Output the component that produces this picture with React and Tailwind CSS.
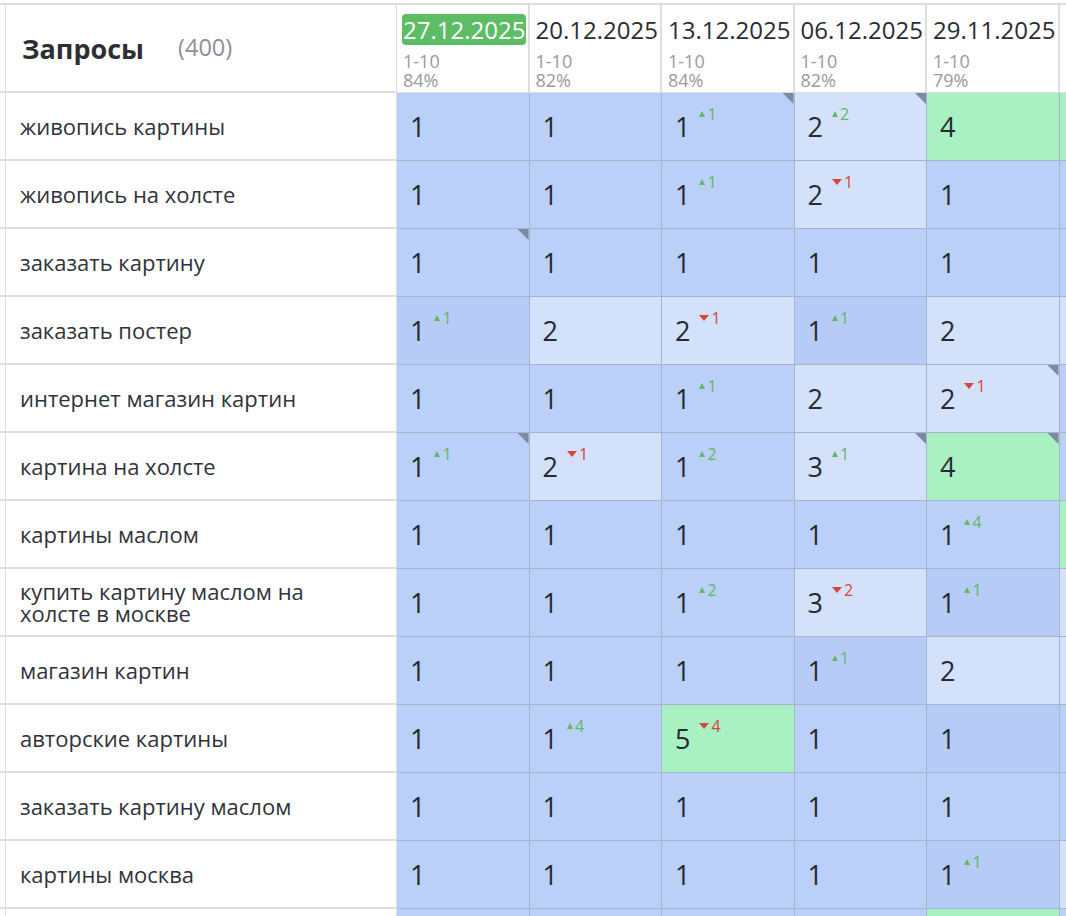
import React from "react";

const dates = [
  { date: "27.12.2025", range: "1-10", pct: "84%", current: true },
  { date: "20.12.2025", range: "1-10", pct: "82%" },
  { date: "13.12.2025", range: "1-10", pct: "84%" },
  { date: "06.12.2025", range: "1-10", pct: "82%" },
  { date: "29.11.2025", range: "1-10", pct: "79%" },
  { date: "22.11.2025", range: "1-10", pct: "80%" },
];

// cell: [value, tone, delta, corner]
const rows = [
  { q: "живопись картины", c: [[1, "b"], [1, "b"], [1, "b", 1, true], [2, "l", 2, true], [4, "g"], [4, "g"]] },
  { q: "живопись на холсте", c: [[1, "b"], [1, "b"], [1, "b", 1], [2, "l", -1], [1, "b"], [1, "b"]] },
  { q: "заказать картину", c: [[1, "b", 0, true], [1, "b"], [1, "b"], [1, "b"], [1, "b"], [1, "b"]] },
  { q: "заказать постер", c: [[1, "d", 1], [2, "l"], [2, "l", -1], [1, "d", 1], [2, "l"], [2, "l"]] },
  { q: "интернет магазин картин", c: [[1, "b"], [1, "b"], [1, "b", 1], [2, "l"], [2, "l", -1, true], [1, "b"]] },
  { q: "картина на холсте", c: [[1, "b", 1, true], [2, "l", -1], [1, "b", 2], [3, "l", 1, true], [4, "g", 0, true], [1, "b"]] },
  { q: "картины маслом", c: [[1, "b"], [1, "b"], [1, "b"], [1, "b"], [1, "b", 4], [4, "g"]] },
  { q: "купить картину маслом на холсте в москве", c: [[1, "b"], [1, "b"], [1, "b", 2], [3, "l", -2], [1, "d", 1], [2, "l"]] },
  { q: "магазин картин", c: [[1, "b"], [1, "b"], [1, "b"], [1, "d", 1], [2, "l"], [2, "l"]] },
  { q: "авторские картины", c: [[1, "b"], [1, "b", 4], [5, "g", -4], [1, "b"], [1, "d"], [1, "b"]] },
  { q: "заказать картину маслом", c: [[1, "b"], [1, "b"], [1, "b"], [1, "b"], [1, "b"], [1, "b"]] },
  { q: "картины москва", c: [[1, "b"], [1, "b"], [1, "b"], [1, "b"], [1, "d", 1], [2, "l"]] },
  { q: "картины на заказ", c: [[1, "b"], [1, "b"], [1, "b"], [1, "b"], [4, "g"], [1, "b"]] },
];

const tones = {
  b: "bg-[#bad0f8]",
  d: "bg-[#b7cbf7]",
  l: "bg-[#d3e1fb]",
  g: "bg-[#a9f0c2]",
};

function Delta({ d }) {
  if (!d) return null;
  const up = d > 0;
  return (
    <span
      className={`relative -top-[13px] ml-[9px] flex items-center text-[16px] leading-none ${
        up ? "text-[#62b768]" : "text-[#d9453d]"
      }`}
    >
      <svg width={up ? 6 : 10} height={6} viewBox={up ? "0 0 6 6" : "0 0 10 6"} className="mr-[2px]">
        {up ? <polygon points="3,0 6,6 0,6" fill="currentColor" /> : <polygon points="0,0 10,0 5,6" fill="currentColor" />}
      </svg>
      {Math.abs(d)}
    </span>
  );
}

function Cell({ cell }) {
  const [v, t, d, corner] = cell;
  return (
    <div
      className={`relative flex h-full w-[132.5px] shrink-0 items-center border-r border-b border-[#a7b4ce] pl-[13px] ${tones[t]}`}
    >
      <span className="text-[27px] leading-none text-[#262b33]">{v}</span>
      <Delta d={d} />
      {corner && (
        <div className="absolute top-0 right-0 h-[11px] w-[11px] bg-[#7d8aa4] [clip-path:polygon(0_0,100%_0,100%_100%)]" />
      )}
    </div>
  );
}

export default function App() {
  return (
    <div className="h-[916px] w-[1066px] overflow-hidden bg-white font-['Open_Sans',sans-serif]">
      <div className="mt-[3px] w-max border-t-2 border-[#dedede]">
        {/* header */}
        <div className="flex h-[88px]">
          <div className="w-[6px] shrink-0 border-r border-b-2 border-[#dedede]" />
          <div className="flex w-[391px] shrink-0 items-center border-r border-b-2 border-[#dedede] pl-[16px]">
            <span className="text-[27px] font-bold leading-none text-[#2b2e35]">Запросы</span>
            <span className="ml-[34px] text-[23.5px] leading-none text-[#8c9099]">(400)</span>
          </div>
          {dates.map((h) => (
            <div
              key={h.date}
              className="flex w-[132.5px] shrink-0 flex-col items-start border-r-2 border-b border-[#dedede] pt-[9px] pl-[5px]"
            >
              <span
                className={`h-[31px] rounded-[4px] px-[1px] text-[24px] leading-[31px] whitespace-nowrap ${
                  h.current ? "bg-[#5cbd65] text-white" : "text-[#2a2d33]"
                }`}
              >
                {h.date}
              </span>
              <div className="mt-[7px] pl-[1px] text-[18px] leading-[19px] text-[#9a9a9a]">
                {h.range}
                <br />
                {h.pct}
              </div>
            </div>
          ))}
        </div>

        {/* rows */}
        {rows.map((r) => (
          <div key={r.q} className="flex h-[68px]">
            <div className="w-[6px] shrink-0 border-r border-b-2 border-[#dedede]" />
            <div className="flex w-[391px] shrink-0 items-center border-r border-b-2 border-[#dedede] pr-[30px] pl-[14px]">
              <span className="text-[22px] leading-[22px] text-[#30333a]">{r.q}</span>
            </div>
            {r.c.map((c, i) => (
              <Cell key={i} cell={c} />
            ))}
          </div>
        ))}
      </div>
    </div>
  );
}
